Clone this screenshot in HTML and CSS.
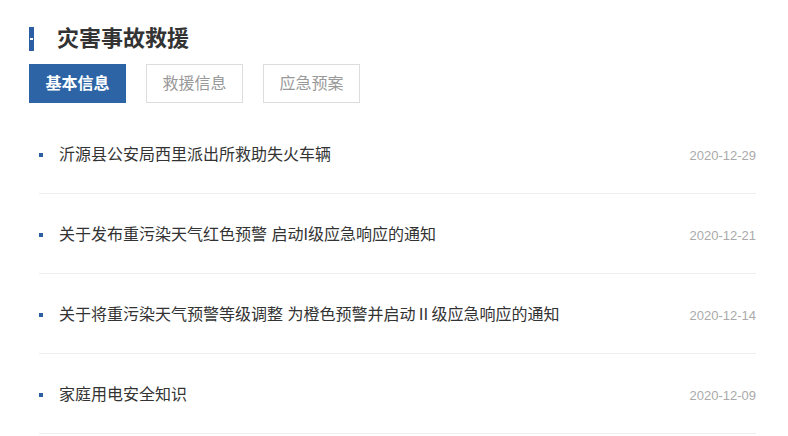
FILE: index.html
```html
<!DOCTYPE html>
<html lang="zh-CN">
<head>
  <meta charset="UTF-8" />
  <meta name="viewport" content="width=device-width, initial-scale=1.0" />
  <title>灾害事故救援</title>
  <link rel="stylesheet" href="styles.css">
</head>
<body>
  <div class="panel">
    <h2 class="title"><span class="mark"></span>灾害事故救援</h2>
    <div class="tabs">
      <a class="tab active" href="#">基本信息</a>
      <a class="tab" href="#">救援信息</a>
      <a class="tab" href="#">应急预案</a>
    </div>
    <ul class="news">
      <li><a href="#">沂源县公安局西里派出所救助失火车辆</a><span class="date">2020-12-29</span></li>
      <li><a href="#">关于发布重污染天气红色预警 启动I级应急响应的通知</a><span class="date">2020-12-21</span></li>
      <li><a href="#">关于将重污染天气预警等级调整 为橙色预警并启动Ⅱ级应急响应的通知</a><span class="date">2020-12-14</span></li>
      <li><a href="#">家庭用电安全知识</a><span class="date">2020-12-09</span></li>
    </ul>
  </div>
</body>
</html>
```

FILE: styles.css
```css
body {
  margin: 0;
  font-family: "Liberation Sans", "Noto Sans CJK SC", sans-serif;
  background: #fff;
  color: #333;
}
.panel {
  padding: 26px 32px 0 29px;
}
.title {
  display: flex;
  align-items: center;
  margin: 0;
  height: 26px;
  font-size: 22px;
  line-height: 26px;
  font-weight: bold;
  color: #333;
}
.mark {
  position: relative;
  width: 5px;
  height: 24px;
  margin-right: 23px;
  background: #2c5ea3;
}
.mark::after {
  content: "";
  position: absolute;
  left: 1px;
  top: 11px;
  width: 3px;
  height: 2px;
  background: #fff;
}
.tabs {
  display: flex;
  gap: 20px;
  margin-top: 12px;
}
.tab {
  box-sizing: border-box;
  width: 97px;
  height: 39px;
  line-height: 37px;
  text-align: center;
  font-size: 16px;
  color: #999;
  text-decoration: none;
  border: 1px solid #ddd;
}
.tab.active {
  background: #2c64a5;
  border-color: #2c64a5;
  color: #fff;
  font-weight: bold;
}
.news {
  list-style: none;
  margin: 11px 0 0 10px;
  padding: 0;
}
.news li {
  display: flex;
  align-items: center;
  height: 80px;
  box-sizing: border-box;
  padding: 31px 0 28px 20px;
  border-bottom: 1px solid #eee;
  position: relative;
}
.news li::before {
  content: "";
  position: absolute;
  left: 0;
  top: 39px;
  width: 4px;
  height: 4px;
  background: #2c5ea3;
}
.news a {
  flex: 1;
  font-size: 16px;
  line-height: 20px;
  color: #333;
  text-decoration: none;
}
.date {
  font-size: 13px;
  color: #aaa;
}
```
